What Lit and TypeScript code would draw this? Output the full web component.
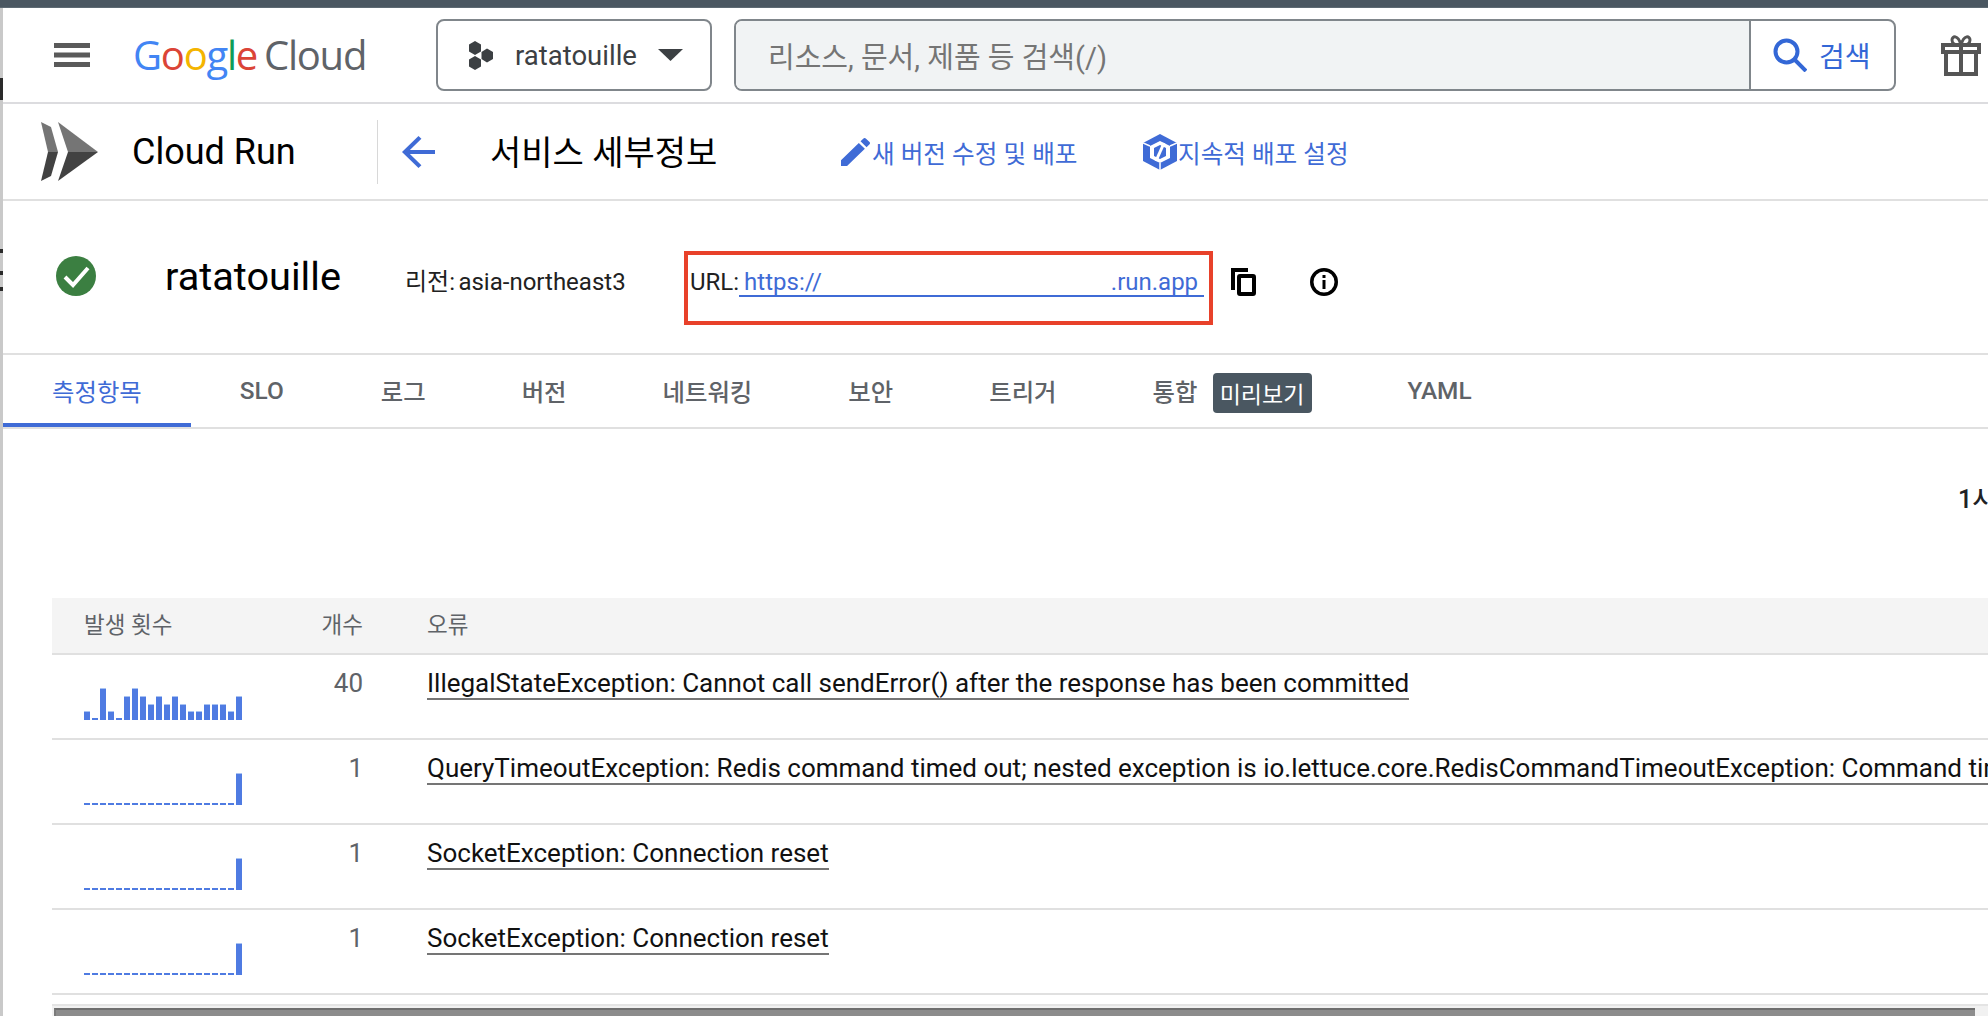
import { LitElement, html, css } from "lit";
import { customElement } from "lit/decorators.js";

const TABS = ["측정항목", "SLO", "로그", "버전", "네트워킹", "보안", "트리거", "통합", "YAML"];
const Z = 0;
const ROWS = [
  { bars: [9, Z, 32, 9, Z, 24, 32, 24, 16, 24, 16, 24, 16, 9, 9, 16, 16, 16, 9, 24], count: "40", text: "IllegalStateException: Cannot call sendError() after the response has been committed" },
  { bars: [...Array(19).fill(Z), 32], count: "1", text: "QueryTimeoutException: Redis command timed out; nested exception is io.lettuce.core.RedisCommandTimeoutException: Command timed out" },
  { bars: [...Array(19).fill(Z), 32], count: "1", text: "SocketException: Connection reset" },
  { bars: [...Array(19).fill(Z), 32], count: "1", text: "SocketException: Connection reset" },
];

@customElement("app-root")
export class AppRoot extends LitElement {
  static styles = css`
    :host { display: block; width: 1988px; height: 1016px; overflow: hidden; background: #fff; position: relative;
      font-family: Roboto, "Noto Sans CJK KR", sans-serif; color: #000; }
    * { box-sizing: border-box; }
    svg { display: block; flex: none; }
    .chrome { height: 8px; background: #4a5761; border-bottom: 1px solid #5d6a73; }
    .shell { display: flex; height: 1008px; }
    .strip { width: 3px; flex: none; background: #c9c9c9; }
    .main { flex: 1; min-width: 0; display: flex; flex-direction: column; overflow: hidden; }
    .speck { position: absolute; left: 0; width: 3px; background: #2a2a2a; }

    .header { height: 96px; flex: none; display: flex; align-items: center; border-bottom: 2px solid #dcdcdf; }
    .burger { margin-left: 51px; }
    .logo { margin-left: 43px; width: 303px; font-family: "Open Sans", Roboto, sans-serif; font-size: 40px; letter-spacing: -1.25px; line-height: 50px; white-space: nowrap; color: #5f6368; }
    .logo .b { color: #4285f4; } .logo .r { color: #db4437; } .logo .y { color: #f4b400; } .logo .g { color: #0f9d58; }
    .logo .cloud { margin-left: 7px; }
    .project { width: 276px; height: 72px; border: 2px solid #80868b; border-radius: 8px; display: flex; align-items: center; padding-left: 29px; font-size: 27.5px; color: #3c4043; }
    .project .name { margin-left: 21px; }
    .project .caret { margin-left: 21px; }
    .search { width: 1162px; height: 72px; margin-left: 22px; border: 2px solid #80868b; border-radius: 8px; display: flex; overflow: hidden; }
    .field { width: 1015px; background: #f1f3f4; border-right: 2px solid #80868b; padding-left: 32px; display: flex; align-items: center; font-size: 29px; color: #757575; }
    .go { flex: 1; display: flex; align-items: center; padding-left: 22px; gap: 12px; font-size: 28px; color: #3367d6; }
    .gift { margin-left: 45px; }

    .bar2 { height: 97px; flex: none; display: flex; align-items: center; border-bottom: 2px solid #e0e0e0; }
    .runlogo { margin-left: 38px; }
    .runname { margin-left: 34px; width: 245px; font-size: 36px; line-height: 44px; margin-top: 1px; }
    .vline { width: 1px; height: 64px; background: #d8d8d8; }
    .back { margin-left: 24px; }
    .title { margin-left: 55px; width: 351px; font-size: 34px; margin-top: -3px; white-space: nowrap; }
    .act { display: flex; align-items: center; font-size: 24.6px; color: #3f6bd6; white-space: nowrap; margin-top: 1px; }
    .act.a1 { gap: 2px; width: 302px; }
    .act.a2 { gap: 1px; }

    .info { height: 154px; flex: none; display: flex; align-items: center; border-bottom: 2px solid #e0e0e0; }
    .check { margin-left: 53px; margin-top: -3px; }
    .svc { margin-left: 69px; width: 241px; font-size: 39.7px; margin-top: -2px; white-space: nowrap; }
    .region { width: 279px; margin-left: -1px; font-size: 24px; word-spacing: -2.5px; color: #212121; white-space: nowrap; margin-top: 4px; }
    .urlbox { width: 529px; height: 74px; border: 4px solid #e8412a; display: flex; align-items: flex-start; padding: 13px 0 0 2px; font-size: 24px; color: #212121; margin-top: 22px; }
    .link { margin-left: 0; width: 465px; height: 29px; border-bottom: 2px solid #3f6bd6; color: #3f6bd6; display: flex; justify-content: space-between; padding: 0 6px 0 5px; line-height: 28px; }
    .urlbox .lbl { line-height: 28px; }
    .copy { margin-left: 18px; margin-top: 9px; }
    .inf { margin-left: 54px; margin-top: 9px; }

    .tabs { height: 74px; flex: none; display: flex; border-bottom: 2px solid #e0e0e0; }
    .tab { padding: 0 48px; height: 72px; display: flex; align-items: center; font-size: 24.4px; font-weight: 500; color: #5f6368; white-space: nowrap; position: relative; padding-bottom: 1px; }
    .tab.wide { padding-left: 49px; padding-right: 49px; }
    .tab.on { color: #3f6bd6; font-weight: 400; }
    .tab.on::after { content: ""; position: absolute; left: 0; right: 0; bottom: 0; height: 4px; background: #3f6bd6; }
    .tab.hasbadge { padding-right: 162px; }
    .badge { position: absolute; left: 108px; top: 18px; width: 99px; height: 40px; background: #4a5761; color: #fff; border-radius: 4px; font-size: 23px; font-weight: 400; display: flex; align-items: center; justify-content: center; }

    .range { height: 169px; flex: none; padding: 56px 0 0 1955px; font-size: 25px; font-weight: 500; color: #202124; white-space: nowrap; line-height: 30px; }

    .table { margin-left: 49px; flex: 1; width: 2000px; display: flex; flex-direction: column; }
    .row { display: grid; grid-template-columns: 311px auto; column-gap: 64px; }
    .thead { height: 57px; background: #f4f4f4; border-bottom: 2px solid #e0e0e0; align-items: center; font-size: 22.5px; color: #5f6368; padding-bottom: 5px; }
    .thead .c1 { display: flex; justify-content: space-between; align-items: center; padding-left: 32px; }
    .tbody { height: 85px; border-bottom: 2px solid #e0e0e0; position: relative; }
    .c1 { display: flex; justify-content: space-between; align-items: flex-start; }
    .spark { margin: 17px 0 0 32px; height: 48px; width: 158px; display: flex; gap: 2px; align-items: flex-end; }
    .bar { width: 6px; background: #4f7be2; border-top: 1px solid #a9c3f2; }
    .bar.zero { height: 2px; border: none; }
    .count { font-size: 26px; color: #5f6368; line-height: 30px; padding-top: 13px; }
    .err { font-size: 26px; line-height: 30px; padding-top: 13px; white-space: nowrap; }
    .err span { display: inline-block; border-bottom: 2px solid #757575; line-height: 30px; color: #111; }

    .foot { flex: 1; margin-top: 9px; background: #f1f1f1; border-top: 2px solid #e4e4e4; padding: 2px 0 0 2px; width: 1939px; }
    .thumb { height: 10px; width: 1921px; background: #8c8c8c; border-top: 2px solid #6e6e6e; border-left: 2px solid #7a7a7a; }
  `;

  render() {
    return html`
      <div class="chrome"></div>
      <div class="speck" style="top:78px;height:22px"></div>
      <div class="speck" style="top:249px;height:4px"></div>
      <div class="speck" style="top:271px;height:4px"></div>
      <div class="speck" style="top:287px;height:4px"></div>
      <div class="shell">
        <div class="strip"></div>
        <div class="main">
          <div class="header">
            <svg class="burger" width="36" height="24" viewBox="0 0 36 24" fill="#5a5a5a"><rect width="36" height="5"/><rect y="9.5" width="36" height="5"/><rect y="19" width="36" height="5"/></svg>
            <div class="logo"><span class="b">G</span><span class="r">o</span><span class="y">o</span><span class="b">g</span><span class="g">l</span><span class="r">e</span><span class="cloud">Cloud</span></div>
            <div class="project">
              <svg width="27" height="29" viewBox="0 0 27 29" fill="#3c4043"><polygon points="8,0 14,3.5 14,10.5 8,14 2,10.5 2,3.5"/><polygon points="20,7.5 26,11 26,18 20,21.5 14.500,18 14.500,11"/><polygon points="8,15 14,18.500 14,25.500 8,29 2,25.500 2,18.500"/></svg>
              <span class="name">ratatouille</span>
              <svg class="caret" width="25" height="12" viewBox="0 0 25 12" fill="#3c4043"><polygon points="0,0 25,0 12.500,12"/></svg>
            </div>
            <div class="search">
              <div class="field">리소스, 문서, 제품 등 검색(/)</div>
              <div class="go">
                <svg width="34" height="34" viewBox="0 0 34 34" fill="none" stroke="#3367d6" stroke-width="4"><circle cx="13.500" cy="13.500" r="11"/><path d="M21.500 21.500L33 33"/></svg>
                <span>검색</span>
              </div>
            </div>
            <svg class="gift" width="40" height="42" viewBox="0 0 40 42" fill="none" stroke="#555" stroke-width="4"><path d="M2 11h36v7H2z"/><path d="M5 18v22h30V18M20 11v29"/><path d="M20 11c-6 0-9-1-9-5s6-6 9 5c3-11 9-9 9-5s-3 5-9 5z" stroke-width="3"/></svg>
          </div>

          <div class="bar2">
            <svg class="runlogo" width="57" height="59" viewBox="0 0 57 59">
              <polygon points="0,0 10,5 17,30 7,30" fill="#757575"/><polygon points="7,30 17,30 10,54 0,59" fill="#424242"/>
              <polygon points="17,0 57,30 27,30" fill="#757575"/><polygon points="27,30 57,30 17,59" fill="#424242"/>
            </svg>
            <div class="runname">Cloud Run</div>
            <div class="vline"></div>
            <svg class="back" width="33" height="32" viewBox="4 4 16 16" fill="#3f6bd6" preserveAspectRatio="none"><path d="M20 11H7.830l5.590-5.590L12 4l-8 8 8 8 1.410-1.410L7.830 13H20v-2z"/></svg>
            <div class="title">서비스 세부정보</div>
            <div class="act a1">
              <svg width="29" height="28" viewBox="3 3 18 18" fill="#3f6bd6" preserveAspectRatio="none"><path d="M3 17.250V21h3.750L17.810 9.940l-3.750-3.750L3 17.250zM20.710 7.040c.39-.39.39-1.020 0-1.410l-2.340-2.340c-.39-.39-1.020-.39-1.410 0l-1.830 1.830 3.750 3.750 1.830-1.830z"/></svg>
              <span>새 버전 수정 및 배포</span>
            </div>
            <div class="act a2">
              <svg width="34" height="36" viewBox="0 0 34 36">
                <polygon points="17,0 34,9 34,27 17,36 0,27 0,9" fill="#3f6bd6"/>
                <polygon points="17,7 27,12 27,24 17,29 7,24 7,12" fill="#fff"/>
                <polygon points="17,11 23,14 23,22 17,25 11,22 11,14" fill="#3f6bd6"/>
                <path d="M21 9L13 27" stroke="#fff" stroke-width="3"/>
                <path d="M0 9L7 12M34 9L27 12M17 36V29" stroke="#fff" stroke-width="1.500"/>
              </svg>
              <span>지속적 배포 설정</span>
            </div>
          </div>

          <div class="info">
            <svg class="check" width="40" height="40" viewBox="0 0 40 40"><circle cx="20" cy="20" r="20" fill="#3b7f41"/><path d="M9 21l8 8 15-17" fill="none" stroke="#fff" stroke-width="4"/></svg>
            <div class="svc">ratatouille</div>
            <div class="region">리전: asia-northeast3</div>
            <div class="urlbox">
              <span class="lbl">URL:</span>
              <div class="link"><span>https://</span><span>.run.app</span></div>
            </div>
            <svg class="copy" width="25" height="28" viewBox="0 0 25 28" fill="none" stroke="#000" stroke-width="4"><path d="M2 22V2h15"/><rect x="8" y="8" width="15" height="18" rx="1"/></svg>
            <svg class="inf" width="28" height="28" viewBox="0 0 28 28"><circle cx="14" cy="14" r="12.250" fill="none" stroke="#000" stroke-width="3.500"/><rect x="12.500" y="12" width="3" height="9" fill="#000"/><rect x="12.500" y="7" width="3" height="3" fill="#000"/></svg>
          </div>

          <div class="tabs">
            ${TABS.map((t, i) => html`<div class="tab ${i === 0 ? "on" : ""} ${i < 2 ? "wide" : ""} ${t === "통합" ? "hasbadge" : ""}">${t}${t === "통합" ? html`<span class="badge">미리보기</span>` : ""}</div>`)}
          </div>

          <div class="range">1시간</div>

          <div class="table">
            <div class="row thead">
              <div class="c1"><span>발생 횟수</span><span>개수</span></div>
              <div>오류</div>
            </div>
            ${ROWS.map((r) => html`
              <div class="row tbody">
                <div class="c1">
                  <div class="spark">${r.bars.map((b) => b === 0 ? html`<div class="bar zero"></div>` : html`<div class="bar" style="height:${b}px"></div>`)}</div>
                  <div class="count">${r.count}</div>
                </div>
                <div class="err"><span>${r.text}</span></div>
              </div>`)}
            <div class="foot"><div class="thumb"></div></div>
          </div>
        </div>
      </div>
    `;
  }
}
